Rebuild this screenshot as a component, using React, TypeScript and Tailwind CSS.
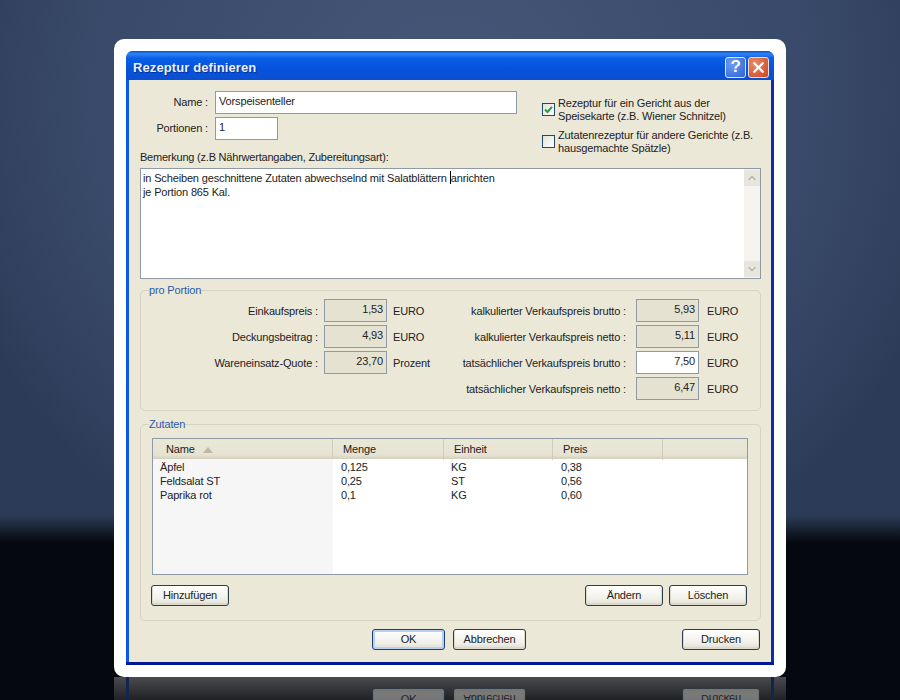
import { ChevronDown, ChevronUp, X } from 'lucide-react';

type BtnProps = {
  label: string;
  className?: string;
  isDefault?: boolean;
};

// XP-Button
function Btn({ label, className = '', isDefault = false }: BtnProps) {
  const look = isDefault
    ? 'border-[#1d3f72] shadow-[inset_0_0_0_2px_#b8d0f0]'
    : 'border-[#2c3e4e] shadow-[inset_0_-1px_0_1px_#dcd9cc]';
  return (
    <div
      className={`flex h-[21px] items-center justify-center rounded-[3px] border bg-[linear-gradient(to_bottom,#ffffff,#f0efe8_70%,#dedcd0)] text-[#222222] ${look} ${className}`}
    >
      {label}
    </div>
  );
}

function Input({ value, className = '' }: { value: string; className?: string }) {
  return (
    <div className={`h-[23px] shrink-0 border border-[#8e9ba6] px-[3px] pt-[2px] leading-[15px] ${className}`}>
      {value}
    </div>
  );
}

function Field({ value, editable = false }: { value: string; editable?: boolean }) {
  return <Input value={value} className={`w-[63px] text-right ${editable ? 'bg-white' : 'bg-[#e5e2d2]'}`} />;
}

const leftRows = [
  { label: 'Einkaufspreis :', value: '1,53', unit: 'EURO' },
  { label: 'Deckungsbeitrag :', value: '4,93', unit: 'EURO' },
  { label: 'Wareneinsatz-Quote :', value: '23,70', unit: 'Prozent' },
];

const rightRows = [
  { label: 'kalkulierter Verkaufspreis brutto :', value: '5,93', editable: false },
  { label: 'kalkulierter Verkaufspreis netto :', value: '5,11', editable: false },
  { label: 'tatsächlicher Verkaufspreis brutto :', value: '7,50', editable: true },
  { label: 'tatsächlicher Verkaufspreis netto :', value: '6,47', editable: false },
];

const ingredients = [
  ['Äpfel', '0,125', 'KG', '0,38'],
  ['Feldsalat ST', '0,25', 'ST', '0,56'],
  ['Paprika rot', '0,1', 'KG', '0,60'],
];

function Checkbox({ checked = false }: { checked?: boolean }) {
  return (
    <div className="flex h-[13px] w-[13px] shrink-0 items-center justify-center border border-[#1f4a6e] bg-[linear-gradient(135deg,#dfe3dc,#ffffff)]">
      {checked && (
        <svg width="9" height="9" viewBox="0 0 9 9">
          <path d="M1 4.5 L3.5 7 L8 1.8" fill="none" stroke="#2f9a3a" strokeWidth="2" />
        </svg>
      )}
    </div>
  );
}

function Group({ title, className = '', children }: { title: string; className?: string; children: React.ReactNode }) {
  return (
    <fieldset className={`rounded-[5px] border border-[#d6d3c2] ${className}`}>
      <legend className="ml-[8px] h-[14px] text-[11px] leading-[14px] text-[#2a5aa6]">{title}</legend>
      {children}
    </fieldset>
  );
}

export default function App() {
  return (
    <div className="flex h-[700px] w-[900px] flex-col items-center overflow-hidden bg-[linear-gradient(to_bottom,transparent_515px,#05080e_543px,#05080e_100%),radial-gradient(ellipse_520px_520px_at_50%_100px,#465779,#394969_70%,#2c3c58_100%)] pt-[39px] text-[11px] tracking-[-0.15px] text-[#222222] [font-family:'Liberation_Sans',sans-serif]">
      {/* weisser Rahmen */}
      <div className="h-[638px] w-[672px] shrink-0 rounded-[10px] bg-white p-[12px]">
        <div className="flex h-[614px] flex-col overflow-hidden rounded-t-[7px] bg-[linear-gradient(to_right,#0a58e4,#0a2fae)]">
          {/* Titelleiste */}
          <div className="flex h-[29px] shrink-0 items-center justify-between bg-[linear-gradient(to_bottom,#0a52d8,#2f84f2_3px,#0a5fe8_7px,#0652dc_60%,#0a4fd2)] pr-[5px] pl-[7px] pt-[4px]">
            <span className="text-[13px] font-bold tracking-[0.1px] text-[#e8f0ff] [text-shadow:1px_1px_1px_#0a2f90]">Rezeptur definieren</span>
            <div className="-mt-[1px] flex gap-[2px]">
              <div className="flex h-[21px] w-[21px] items-center justify-center rounded-[3px] border border-[#dbe6fb] bg-[radial-gradient(circle_at_30%_30%,#6f9cf2,#2a62d8)] text-[17px] font-bold text-white">
                ?
              </div>
              <div className="flex h-[21px] w-[21px] items-center justify-center rounded-[3px] border border-[#f0dcd4] bg-[radial-gradient(circle_at_30%_30%,#ec8a68,#cf4420)] text-white">
                <X size={17} strokeWidth={3.2} />
              </div>
            </div>
          </div>

          {/* Inhalt */}
          <div className="mx-[3px] mb-[3px] flex flex-1 flex-col bg-[#ebe8d8] pl-[11px] pr-[10px] pt-[11px]">
            <div className="flex h-[49px] shrink-0">
              <div className="flex w-[377px] shrink-0 flex-col gap-[3px]">
                <div className="flex gap-[7px]">
                  <span className="w-[68px] pt-[3px] text-right">Name :</span>
                  <Input value="Vorspeisenteller" className="w-[302px] bg-white" />
                </div>
                <div className="flex gap-[7px]">
                  <span className="w-[68px] pt-[3px] text-right">Portionen :</span>
                  <Input value="1" className="w-[63px] bg-white" />
                </div>
              </div>
              <div className="ml-[25px] flex flex-col gap-[6px] pt-[6px] leading-[13px] whitespace-nowrap">
                <div className="flex gap-[3px]">
                  <span className="pt-[6px]"><Checkbox checked /></span>
                  <span>
                    Rezeptur für ein Gericht aus der
                    <br />
                    Speisekarte (z.B. Wiener Schnitzel)
                  </span>
                </div>
                <div className="flex gap-[3px]">
                  <span className="pt-[6px]"><Checkbox /></span>
                  <span>
                    Zutatenrezeptur für andere Gerichte (z.B.
                    <br />
                    hausgemachte Spätzle)
                  </span>
                </div>
              </div>
            </div>

            <div className="mt-[10px] h-[14px] shrink-0 leading-[14px] tracking-[-0.22px]">Bemerkung (z.B Nährwertangaben, Zubereitungsart):</div>

            <div className="mt-[4px] flex h-[111px] shrink-0 border border-[#8e9ba6] bg-white">
              <div className="flex-1 pl-[2px] pt-[2px] leading-[14px]">
                in Scheiben geschnittene Zutaten abwechselnd mit Salatblättern{' '}
                <span className="inline-block h-[13px] w-px bg-black align-[-2px]" />
                anrichten
                <br />
                je Portion 865 Kal.
              </div>
              <div className="flex w-[16px] shrink-0 flex-col justify-between bg-[#f5f4ee] py-px">
                <div className="flex h-[16px] items-center justify-center bg-[#e6e6dc] text-[#b8b8aa]">
                  <ChevronUp size={12} strokeWidth={3} />
                </div>
                <div className="flex h-[16px] items-center justify-center bg-[#e6e6dc] text-[#b8b8aa]">
                  <ChevronDown size={12} strokeWidth={3} />
                </div>
              </div>
            </div>

            <Group title="pro Portion" className="mt-[4px] h-[128px] shrink-0">
              <div className="flex pt-[2px]">
                <div className="flex w-[309px] shrink-0 flex-col gap-[3px]">
                  {leftRows.map((r) => (
                    <div key={r.label} className="flex items-center">
                      <span className="w-[177px] pt-px text-right">{r.label}</span>
                      <span className="ml-[6px]"><Field value={r.value} /></span>
                      <span className="ml-[6px] pt-px">{r.unit}</span>
                    </div>
                  ))}
                </div>
                <div className="flex flex-col gap-[3px]">
                  {rightRows.map((r) => (
                    <div key={r.label} className="flex items-center">
                      <span className="w-[176px] pt-px text-right whitespace-nowrap">{r.label}</span>
                      <span className="ml-[10px]"><Field value={r.value} editable={r.editable} /></span>
                      <span className="ml-[8px] pt-px">EURO</span>
                    </div>
                  ))}
                </div>
              </div>
            </Group>

            <Group title="Zutaten" className="mt-[6px] h-[204px] shrink-0">
              <div className="ml-[11px] mr-[12px] mt-[7px] h-[137px] border border-[#8e9ba6] bg-white">
                <div className="grid h-[20px] grid-cols-[180px_111px_109px_110px_1fr] bg-[linear-gradient(to_bottom,#ebe8d8,#e6e3d2_80%,#d2cfbd)] leading-[21px]">
                  <div className="flex items-center gap-[8px] border-r border-[#cfccb9] pl-[13px]">
                    Name
                    <svg width="10" height="6" viewBox="0 0 10 6">
                      <path d="M5 0 L10 6 L0 6 Z" fill="#bdbaa8" />
                    </svg>
                  </div>
                  <div className="border-r border-[#cfccb9] pl-[10px]">Menge</div>
                  <div className="border-r border-[#cfccb9] pl-[10px]">Einheit</div>
                  <div className="border-r border-[#cfccb9] pl-[10px]">Preis</div>
                  <div />
                </div>
                <div className="grid h-[115px] grid-cols-[180px_1fr]">
                  <div className="bg-[#f6f6f6] pl-[7px] pt-px leading-[14px]">
                    {ingredients.map((row) => (
                      <div key={row[0]}>{row[0]}</div>
                    ))}
                  </div>
                  <div className="pt-px leading-[14px]">
                    {ingredients.map((row) => (
                      <div key={row[0]} className="grid grid-cols-[110px_110px_1fr] pl-[8px]">
                        <span>{row[1]}</span>
                        <span>{row[2]}</span>
                        <span>{row[3]}</span>
                      </div>
                    ))}
                  </div>
                </div>
              </div>
              <div className="mt-[10px] flex pl-[10px] pr-[13px]">
                <Btn label="Hinzufügen" className="w-[78px]" />
                <Btn label="Ändern" className="ml-auto w-[78px]" />
                <Btn label="Löschen" className="ml-[6px] w-[78px]" />
              </div>
            </Group>

            <div className="mt-[8px] flex pr-px">
              <Btn label="OK" isDefault className="ml-[232px] w-[73px]" />
              <Btn label="Abbrechen" className="ml-[8px] w-[73px]" />
              <Btn label="Drucken" className="ml-auto w-[78px]" />
            </div>
          </div>
          <div className="-mt-[3px] h-[3px] shrink-0 bg-[#001a96]" />
        </div>
      </div>

      {/* Spiegelung */}
      <div className="h-[23px] w-[672px] shrink-0 overflow-hidden bg-[linear-gradient(to_bottom,#4a4b4e,#1f2125)] px-[12px]">
        <div className="h-[40px] border-x-[3px] border-[#12254f] pt-[11px]">
          <div className="flex pl-[11px] pr-[11px] opacity-40">
            <Btn label="OK" className="ml-[232px] w-[73px] scale-y-[-1]" />
            <Btn label="Abbrechen" className="ml-[8px] w-[73px] scale-y-[-1]" />
            <Btn label="Drucken" className="ml-auto w-[78px] scale-y-[-1]" />
          </div>
        </div>
      </div>
    </div>
  );
}
